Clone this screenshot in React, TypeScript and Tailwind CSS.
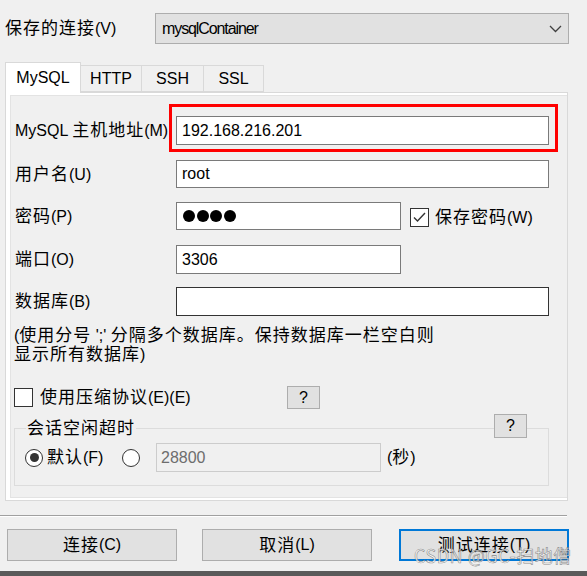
import React from "react";

const CJK = /([\u3000-\u303f\u3400-\u9fff\uff00-\uffef]+)/;

function T({ s }: { s: string }) {
  const parts = s.split(CJK);
  return (
    <>
      {parts.map((p, i) =>
        p === "" ? null : CJK.test(p) ? (
          <span key={i} className="text-[17px] tracking-[1px]">
            {p}
          </span>
        ) : (
          <span key={i}>{p}</span>
        )
      )}
    </>
  );
}

function Input({
  w,
  children,
  dark,
}: {
  w: string;
  children?: React.ReactNode;
  dark?: boolean;
}) {
  return (
    <div
      className={
        "h-full border bg-white flex items-center pl-[5px] shrink-0 " +
        w +
        " " +
        (dark ? "border-[#333333]" : "border-[#7a7a7a]")
      }
    >
      {children}
    </div>
  );
}

function Radio({ checked }: { checked?: boolean }) {
  return (
    <div className="w-[18px] h-[18px] rounded-full border border-[#333333] bg-white flex items-center justify-center shrink-0">
      {checked && <div className="w-[9px] h-[9px] rounded-full bg-[#333333]" />}
    </div>
  );
}

function Check({ checked }: { checked?: boolean }) {
  return (
    <div className="w-[19px] h-[19px] border border-[#333333] bg-white flex items-center justify-center shrink-0">
      {checked && (
        <svg width="15" height="15" viewBox="0 0 15 15">
          <polyline
            points="2,7.5 5.5,11 13,3"
            fill="none"
            stroke="#333333"
            strokeWidth="1.4"
          />
        </svg>
      )}
    </div>
  );
}

function Btn({ w, children, cls }: { w: string; children: React.ReactNode; cls?: string }) {
  return (
    <div
      className={
        "h-full bg-[#e1e1e1] flex items-center justify-center shrink-0 " +
        w +
        " " +
        (cls ?? "border border-[#adadad]")
      }
    >
      {children}
    </div>
  );
}

export default function App() {
  return (
    <div className="w-[587px] h-[576px] bg-[#f0f0f0] relative overflow-hidden font-['Liberation_Sans','Noto_Sans_CJK_SC',sans-serif] text-[16px] text-black flex flex-col leading-none">
      {/* top row */}
      <div className="flex items-center h-[31px] mt-[13px]">
        <div className="pl-[5px] w-[155px] shrink-0">
          <T s="保存的连接(V)" />
        </div>
        <div className="w-[414px] h-full border border-[#adadad] bg-[#e1e1e1] flex items-center justify-between pl-[6px] pr-[6px]">
          <span className="tracking-[-1.1px]">mysqlContainer</span>
          <svg width="13" height="8" viewBox="0 0 13 8">
            <path d="M1 1 L6.5 6.5 L12 1" fill="none" stroke="#404040" strokeWidth="1.3" />
          </svg>
        </div>
      </div>

      {/* tabs */}
      <div className="flex items-end ml-[5px] h-[31px] mt-[18px] -mb-px relative z-10">
        <div className="w-[76px] h-[31px] border border-b-0 border-[#d9d9d9] bg-white flex items-center justify-center">
          MySQL
        </div>
        <div className="w-[61px] h-[27px] border border-l-0 border-[#d9d9d9] bg-[#f0f0f0] flex items-center justify-center mb-px">
          HTTP
        </div>
        <div className="w-[62px] h-[27px] border border-l-0 border-[#d9d9d9] bg-[#f0f0f0] flex items-center justify-center mb-px">
          SSH
        </div>
        <div className="w-[60px] h-[27px] border border-l-0 border-[#d9d9d9] bg-[#f0f0f0] flex items-center justify-center mb-px">
          SSL
        </div>
      </div>

      {/* panel */}
      <div className="ml-[5px] w-[563px] h-[409px] border border-[#d9d9d9] bg-white flex flex-col shrink-0">
        <div className="ml-[4px] mt-[2px] mb-[2px] flex-1 border-l border-t border-b border-[#e3e3e3] bg-[#f0f0f0] flex flex-col">
          <div className="flex items-center h-[29px] mt-[20px] pl-[4px]">
            <div className="w-[161px] shrink-0">
              <T s="MySQL 主机地址(M)" />
            </div>
            <Input w="w-[373px]">192.168.216.201</Input>
          </div>
          <div className="flex items-center h-[28px] mt-[15px] pl-[4px]">
            <div className="w-[161px] shrink-0">
              <T s="用户名(U)" />
            </div>
            <Input w="w-[373px]">root</Input>
          </div>
          <div className="flex items-center h-[28px] mt-[14px] pl-[4px]">
            <div className="w-[161px] shrink-0">
              <T s="密码(P)" />
            </div>
            <Input w="w-[225px]">
              <div className="flex gap-[1.5px] ml-px">
                <div className="w-[12px] h-[12px] rounded-full bg-black" />
                <div className="w-[12px] h-[12px] rounded-full bg-black" />
                <div className="w-[12px] h-[12px] rounded-full bg-black" />
                <div className="w-[12px] h-[12px] rounded-full bg-black" />
              </div>
            </Input>
            <div className="ml-[9px] mt-[3px] flex items-center">
              <Check checked />
              <span className="ml-[6px]">
                <T s="保存密码(W)" />
              </span>
            </div>
          </div>
          <div className="flex items-center h-[29px] mt-[15px] pl-[4px]">
            <div className="w-[161px] shrink-0">
              <T s="端口(O)" />
            </div>
            <Input w="w-[225px]">3306</Input>
          </div>
          <div className="flex items-center h-[29px] mt-[13px] pl-[4px]">
            <div className="w-[161px] shrink-0">
              <T s="数据库(B)" />
            </div>
            <Input w="w-[373px]" dark />
          </div>
          <div className="mt-[10px] pl-[3px] leading-[19px]">
            <div>
              <T s="(使用分号 ';' 分隔多个数据库。保持数据库一栏空白则" />
            </div>
            <div>
              <T s="显示所有数据库)" />
            </div>
          </div>
          <div className="flex items-center h-[23px] mt-[22px] pl-[3px]">
            <div className="w-[273px] flex items-center shrink-0">
              <Check />
              <span className="ml-[7px]">
                <T s="使用压缩协议(E)(E)" />
              </span>
            </div>
            <Btn w="w-[33px]">?</Btn>
          </div>
          <div className="ml-[3px] mt-[19px] w-[535px] h-[58px] border border-[#dcdcdc] relative pt-[14px]">
            <div className="absolute left-[11px] -top-[10px] px-[1px] bg-[#f0f0f0] leading-[20px]">
              <T s="会话空闲超时" />
            </div>
            <div className="absolute left-[479px] -top-[15px] h-[24px]">
              <Btn w="w-[33px]">?</Btn>
            </div>
            <div className="flex items-center h-[29px] pl-[10px]">
              <div className="w-[97px] flex items-center shrink-0">
                <Radio checked />
                <span className="ml-[4px]">
                  <T s="默认(F)" />
                </span>
              </div>
              <Radio />
              <div className="ml-[16px] w-[225px] h-full border border-[#cccccc] bg-[#f0f0f0] flex items-center pl-[4px] text-[#6d6d6d]">
                28800
              </div>
              <span className="ml-[6px]">
                <T s="(秒)" />
              </span>
            </div>
          </div>
        </div>
      </div>

      {/* separator */}
      <div className="mt-[14px] w-[567px] h-px bg-[#a0a0a0]" />
      <div className="w-[567px] h-px bg-white" />

      {/* buttons */}
      <div className="flex h-[32px] mt-[12px]">
        <div className="ml-[7px] h-full">
          <Btn w="w-[170px]">
            <T s="连接(C)" />
          </Btn>
        </div>
        <div className="ml-[25px] h-full">
          <Btn w="w-[170px]">
            <T s="取消(L)" />
          </Btn>
        </div>
        <div className="ml-[27px] h-full">
          <Btn w="w-[170px]" cls="border-2 border-[#0078d7]">
            <T s="测试连接(T)" />
          </Btn>
        </div>
      </div>

      <div className="mt-[10px] flex-1 bg-[#5a5a5a]" />

      {/* red annotation */}
      <div className="absolute left-[169px] top-[104px] w-[389px] h-[48px] border-[3px] border-[#ff0000]" />

      {/* watermark */}
      <div className="absolute left-[414px] top-[546px] text-[18px] font-['Noto_Sans_CJK_SC',sans-serif] text-[rgba(255,255,255,0.75)] [-webkit-text-stroke:0.6px_rgba(90,90,90,0.7)] tracking-[0.5px]">
        CSDN @GC-扫地僧
      </div>
    </div>
  );
}
